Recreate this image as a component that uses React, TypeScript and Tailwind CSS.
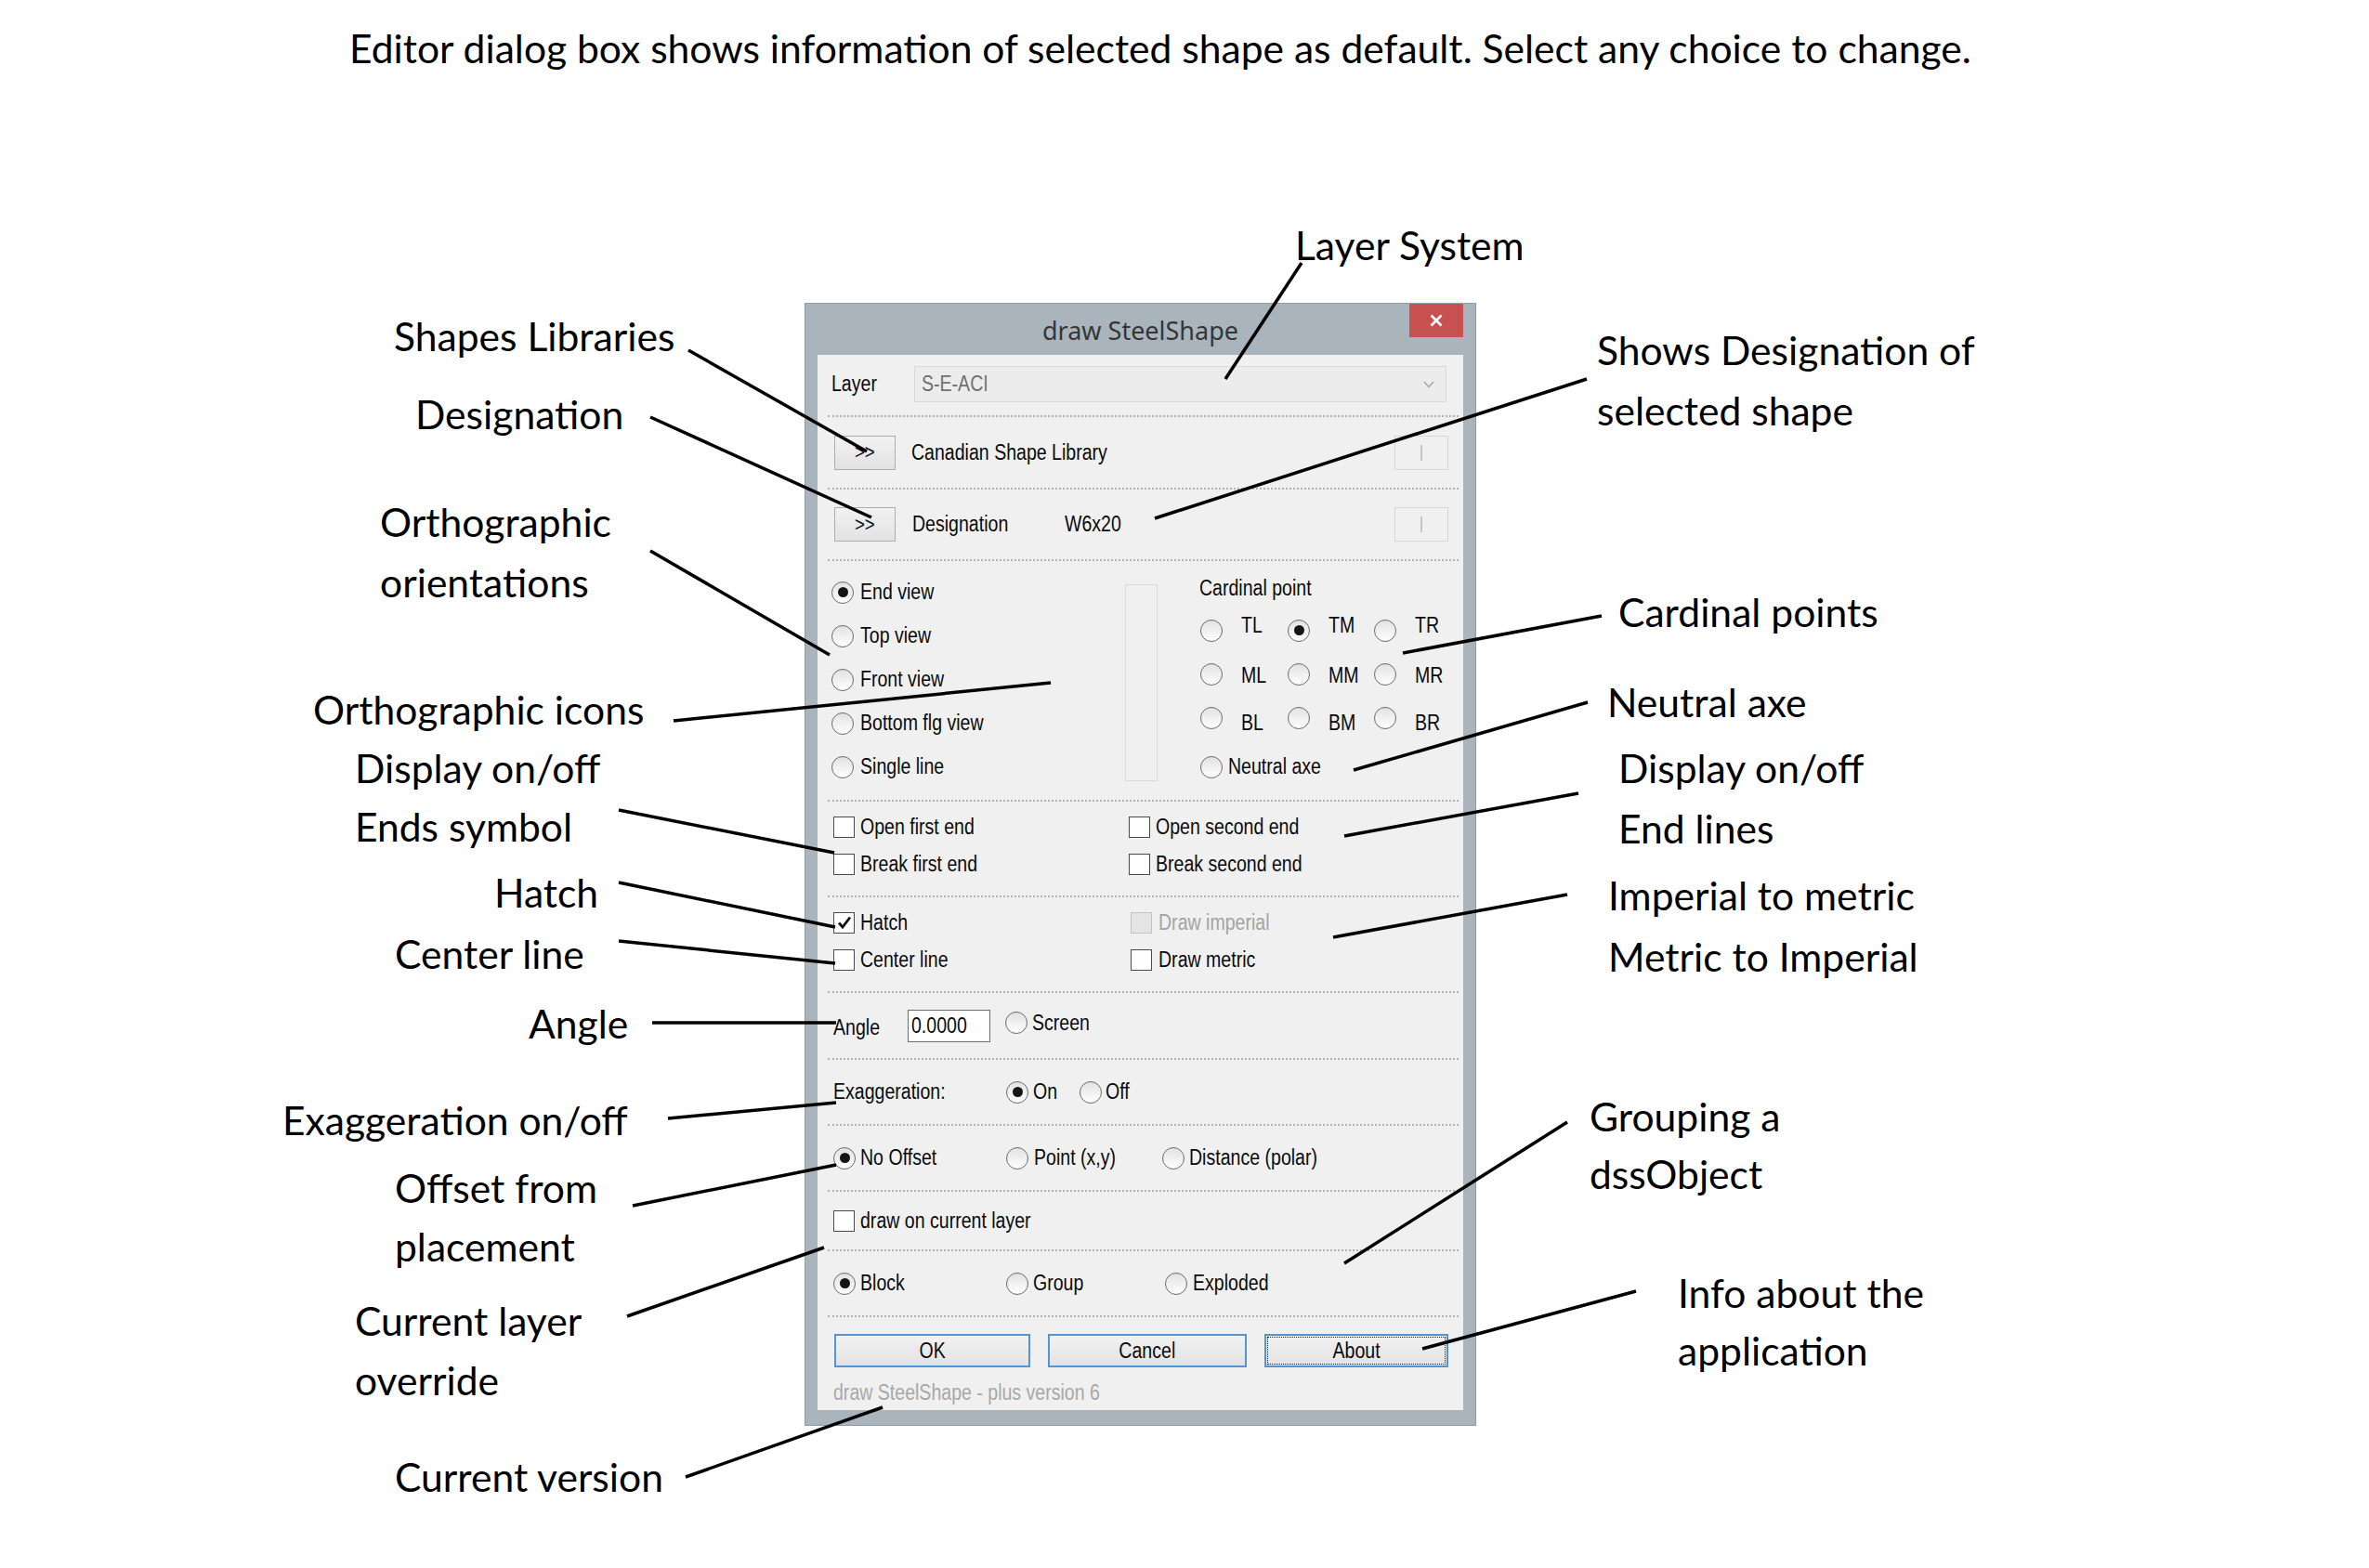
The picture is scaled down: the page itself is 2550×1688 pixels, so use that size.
import React from "react";

function T({ children, className = "" }: { children: React.ReactNode; className?: string }) {
  return <span className={"inline-block origin-left scale-x-[0.85] whitespace-nowrap " + className}>{children}</span>;
}

function TC({ children }: { children: React.ReactNode }) {
  return <span className="inline-block origin-center scale-x-[0.85] whitespace-nowrap">{children}</span>;
}

function Radio({ checked = false }: { checked?: boolean }) {
  return (
    <span className="flex h-[24px] w-[24px] shrink-0 items-center justify-center rounded-full border-[1.5px] border-[#6a6a6a] bg-linear-to-b from-[#e2e2e2] to-[#ffffff]">
      {checked && <span className="h-[11px] w-[11px] rounded-full bg-[#151515]" />}
    </span>
  );
}

function Check({ checked = false, disabled = false }: { checked?: boolean; disabled?: boolean }) {
  return (
    <span
      className={
        disabled
          ? "flex h-[23px] w-[23px] shrink-0 items-center justify-center border-[1.5px] border-[#c2c2c2] bg-[#e4e4e4]"
          : "flex h-[23px] w-[23px] shrink-0 items-center justify-center border-[1.5px] border-[#4a4a4a] bg-white"
      }
    >
      {checked && (
        <svg width="16" height="16" viewBox="0 0 16 16">
          <path d="M2 8.5 L6 13 L14 2.5" fill="none" stroke="#111" strokeWidth="2.8" />
        </svg>
      )}
    </span>
  );
}

function Sep() {
  return <div className="ml-[11px] mr-[5px] h-[2px] shrink-0 border-t-2 border-dotted border-[#b2b2b2]" />;
}

function SmallBtn() {
  return (
    <div className="flex h-[37px] w-[66px] shrink-0 items-center justify-center border border-[#adadad] bg-linear-to-b from-[#f2f2f2] to-[#e2e2e2] text-[22px] leading-none text-[#111]">
      <TC>&gt;&gt;</TC>
    </div>
  );
}

function BarBtn() {
  return (
    <div className="ml-auto flex h-[37px] w-[58px] shrink-0 items-center justify-center border border-[#d6d6d6] bg-[#f0f0f0]">
      <div className="h-[17px] w-[2px] bg-[#c6c6c6]" />
    </div>
  );
}

function Dialog() {
  return (
    <div className="ml-[866px] mt-[250px] flex w-[723px] flex-col border border-[#919ca4] bg-[#aab4bc] px-[13px] pb-[16px] [font-family:'Liberation_Sans',Arial,sans-serif]">
      {/* title bar */}
      <div className="grid h-[55px] grid-cols-[1fr_auto_1fr]">
        <div />
        <div className="self-center pt-[2px] text-[27px] leading-none text-[#363636] [font-family:'Noto_Sans',sans-serif]">
          draw SteelShape
        </div>
        <div className="flex justify-end">
          <div className="flex h-[36px] w-[58px] items-center justify-center bg-[#c75050]">
            <svg width="14" height="14" viewBox="0 0 14 14">
              <path d="M1.5 1.5 L12.5 12.5 M12.5 1.5 L1.5 12.5" stroke="#fff" strokeWidth="2.6" />
            </svg>
          </div>
        </div>
      </div>

      {/* client area */}
      <div className="flex h-[1136px] flex-col bg-[#f0f0f0] text-[23px] leading-none text-[#0a0a0a]">
        {/* Layer */}
        <div className="flex h-[65px] shrink-0 items-start pl-[15px] pt-[12px]">
          <div className="flex h-[39px] w-[89px] items-center">
            <T>Layer</T>
          </div>
          <div className="flex h-[39px] w-[573px] items-center border border-[#d9d9d9] bg-[#ececec] pl-[7px] pr-[12px] text-[#707070]">
            <T>S-E-ACI</T>
            <svg className="ml-auto" width="12" height="8" viewBox="0 0 12 8">
              <path d="M1 1 L6 6.5 L11 1" fill="none" stroke="#a9a9a9" strokeWidth="1.6" />
            </svg>
          </div>
        </div>
        <Sep />
        {/* Library */}
        <div className="flex h-[76px] shrink-0 items-center pl-[18px] pr-[16px]">
          <SmallBtn />
          <T className="ml-[17px]">Canadian Shape Library</T>
          <BarBtn />
        </div>
        <Sep />
        {/* Designation */}
        <div className="flex h-[75px] shrink-0 items-center pl-[18px] pr-[16px]">
          <SmallBtn />
          <span className="ml-[18px] w-[164px]">
            <T>Designation</T>
          </span>
          <T>W6x20</T>
          <BarBtn />
        </div>
        <Sep />
        {/* Views + cardinal */}
        <div className="flex h-[257px] shrink-0">
          <div className="flex w-[331px] flex-col pl-[15px] pt-[10px]">
            {["End view", "Top view", "Front view", "Bottom flg view", "Single line"].map((t, i) => (
              <div key={t} className="flex h-[47px] items-center">
                <Radio checked={i === 0} />
                <T className="ml-[7px]">{t}</T>
              </div>
            ))}
          </div>
          <div className="mt-[25px] h-[212px] w-[35px] border border-[#dadada]" />
          <div className="ml-[45px] flex flex-col pt-[17px]">
            <div className="flex h-[24px] items-center">
              <T>Cardinal point</T>
            </div>
            <div className="mt-[10px] grid grid-cols-[94px_93px_70px]">
              {[
                ["TL", "TM", "TR"],
                ["ML", "MM", "MR"],
                ["BL", "BM", "BR"],
              ].map((row, r) =>
                row.map((lab, c) => (
                  <div key={lab} className="flex h-[47px] items-center pl-[1px]">
                    <Radio checked={r === 0 && c === 1} />
                    <span
                      className={
                        r === 0 ? "ml-[20px] mb-[10px]" : r === 2 ? "ml-[20px] mt-[12px]" : "ml-[20px] mt-[3px]"
                      }
                    >
                      <T>{lab}</T>
                    </span>
                  </div>
                ))
              )}
            </div>
            <div className="mt-[6px] flex h-[47px] items-center pl-[1px]">
              <Radio />
              <T className="ml-[6px]">Neutral axe</T>
            </div>
          </div>
        </div>
        <Sep />
        {/* Ends */}
        <div className="flex h-[101px] shrink-0 flex-col pt-[7px]">
          <div className="flex h-[40px] items-center">
            <div className="flex w-[335px] items-center pl-[17px]">
              <Check />
              <T className="ml-[6px]">Open first end</T>
            </div>
            <div className="flex items-center">
              <Check />
              <T className="ml-[6px]">Open second end</T>
            </div>
          </div>
          <div className="flex h-[40px] items-center">
            <div className="flex w-[335px] items-center pl-[17px]">
              <Check />
              <T className="ml-[6px]">Break first end</T>
            </div>
            <div className="flex items-center">
              <Check />
              <T className="ml-[6px]">Break second end</T>
            </div>
          </div>
        </div>
        <Sep />
        {/* Hatch */}
        <div className="flex h-[101px] shrink-0 flex-col pt-[7px]">
          <div className="flex h-[40px] items-center">
            <div className="flex w-[337px] items-center pl-[17px]">
              <Check checked />
              <T className="ml-[6px]">Hatch</T>
            </div>
            <div className="flex items-center">
              <Check disabled />
              <T className="ml-[7px] text-[#a3a3a3]">Draw imperial</T>
            </div>
          </div>
          <div className="flex h-[40px] items-center">
            <div className="flex w-[337px] items-center pl-[17px]">
              <Check />
              <T className="ml-[6px]">Center line</T>
            </div>
            <div className="flex items-center">
              <Check />
              <T className="ml-[7px]">Draw metric</T>
            </div>
          </div>
        </div>
        <Sep />
        {/* Angle */}
        <div className="flex h-[70px] shrink-0 items-center pl-[17px]">
          <span className="mt-[4px] w-[80px]">
            <T>Angle</T>
          </span>
          <div className="flex h-[35px] w-[89px] items-center border border-[#6e6e6e] bg-white pl-[3px]">
            <T>0.0000</T>
          </div>
          <div className="mb-[6px] ml-[16px] flex items-center">
            <Radio />
            <T className="ml-[5px]">Screen</T>
          </div>
        </div>
        <Sep />
        {/* Exaggeration */}
        <div className="flex h-[69px] shrink-0 items-center pl-[17px]">
          <span className="w-[186px]">
            <T>Exaggeration:</T>
          </span>
          <div className="flex w-[79px] items-center">
            <Radio checked />
            <T className="ml-[5px]">On</T>
          </div>
          <div className="flex items-center">
            <Radio />
            <T className="ml-[4px]">Off</T>
          </div>
        </div>
        <Sep />
        {/* Offset */}
        <div className="flex h-[69px] shrink-0 items-center pl-[17px]">
          <div className="flex w-[186px] items-center">
            <Radio checked />
            <T className="ml-[5px]">No Offset</T>
          </div>
          <div className="flex w-[168px] items-center">
            <Radio />
            <T className="ml-[6px]">Point (x,y)</T>
          </div>
          <div className="flex items-center">
            <Radio />
            <T className="ml-[5px]">Distance (polar)</T>
          </div>
        </div>
        <Sep />
        {/* current layer */}
        <div className="flex h-[62px] shrink-0 items-center pl-[17px]">
          <Check />
          <T className="ml-[6px]">draw on current layer</T>
        </div>
        <Sep />
        {/* Block */}
        <div className="flex h-[69px] shrink-0 items-center pl-[17px]">
          <div className="flex w-[186px] items-center">
            <Radio checked />
            <T className="ml-[5px]">Block</T>
          </div>
          <div className="flex w-[171px] items-center">
            <Radio />
            <T className="ml-[5px]">Group</T>
          </div>
          <div className="flex items-center">
            <Radio />
            <T className="ml-[6px]">Exploded</T>
          </div>
        </div>
        <Sep />
        {/* buttons */}
        <div className="flex shrink-0 flex-col pt-[18px]">
          <div className="flex gap-[19px] pl-[18px]">
            <div className="flex h-[36px] w-[211px] items-center justify-center border-2 border-[#5595d3] bg-linear-to-b from-[#f1f1f1] to-[#e3e3e3]">
              <TC>OK</TC>
            </div>
            <div className="flex h-[36px] w-[214px] items-center justify-center border-2 border-[#5595d3] bg-linear-to-b from-[#f1f1f1] to-[#e3e3e3]">
              <TC>Cancel</TC>
            </div>
            <div className="flex h-[36px] w-[198px] items-center justify-center border-2 border-[#5595d3] bg-linear-to-b from-[#f1f1f1] to-[#e3e3e3] p-[1px]">
              <div className="flex h-full w-full items-center justify-center border border-dotted border-[#222]">
                <TC>About</TC>
              </div>
            </div>
          </div>
          <div className="mt-[16px] pl-[17px] text-[#a8a8a8]">
            <T>draw SteelShape - plus version 6</T>
          </div>
        </div>
      </div>
    </div>
  );
}

const lines: [number, number, number, number][] = [
  [741, 377, 933, 486],
  [700, 449, 938, 557],
  [700, 593, 893, 705],
  [725, 776, 1131, 735],
  [666, 872, 898, 918],
  [666, 950, 899, 998],
  [666, 1013, 899, 1037],
  [702, 1101, 900, 1101],
  [719, 1204, 900, 1187],
  [681, 1298, 900, 1254],
  [675, 1417, 887, 1343],
  [738, 1590, 950, 1515],
  [1401, 283, 1319, 408],
  [1708, 408, 1243, 558],
  [1724, 663, 1510, 703],
  [1709, 756, 1457, 829],
  [1699, 854, 1447, 900],
  [1687, 963, 1435, 1009],
  [1687, 1208, 1447, 1360],
  [1761, 1390, 1531, 1452],
];

export default function App() {
  return (
    <div className="relative h-[1688px] w-[2550px] overflow-hidden bg-white text-black [font-family:'Lato','Open_Sans',sans-serif]">
      <div className="pl-[376px] pt-[28px] text-[42.6px] leading-[48px]">
        Editor dialog box shows information of selected shape as default. Select any choice to change.
      </div>

      <Dialog />

      {/* leader lines */}
      <svg className="pointer-events-none absolute left-0 top-0" width="2550" height="1688">
        {lines.map(([x1, y1, x2, y2], i) => (
          <line key={i} x1={x1} y1={y1} x2={x2} y2={y2} stroke="#000" strokeWidth="3.5" />
        ))}
      </svg>

      {/* left annotations */}
      <div className="absolute left-[424px] top-[338px] text-[42.6px] leading-[48px]">Shapes Libraries</div>
      <div className="absolute left-[447px] top-[422px] text-[42.6px] leading-[48px]">Designation</div>
      <div className="absolute left-[409px] top-[538px] text-[42.6px] leading-[48px]">Orthographic</div>
      <div className="absolute left-[409px] top-[603px] text-[42.6px] leading-[48px]">orientations</div>
      <div className="absolute left-[337px] top-[740px] text-[42.6px] leading-[48px]">Orthographic icons</div>
      <div className="absolute left-[382px] top-[803px] text-[42.6px] leading-[48px]">Display on/off</div>
      <div className="absolute left-[382px] top-[866px] text-[42.6px] leading-[48px]">Ends symbol</div>
      <div className="absolute left-[532px] top-[937px] text-[42.6px] leading-[48px]">Hatch</div>
      <div className="absolute left-[425px] top-[1003px] text-[42.6px] leading-[48px]">Center line</div>
      <div className="absolute left-[569px] top-[1078px] text-[42.6px] leading-[48px]">Angle</div>
      <div className="absolute left-[304px] top-[1182px] text-[42.6px] leading-[48px]">Exaggeration on/off</div>
      <div className="absolute left-[425px] top-[1255px] text-[42.6px] leading-[48px]">Offset from</div>
      <div className="absolute left-[425px] top-[1318px] text-[42.6px] leading-[48px]">placement</div>
      <div className="absolute left-[382px] top-[1398px] text-[42.6px] leading-[48px]">Current layer</div>
      <div className="absolute left-[382px] top-[1462px] text-[42.6px] leading-[48px]">override</div>
      <div className="absolute left-[425px] top-[1566px] text-[42.6px] leading-[48px]">Current version</div>

      {/* right annotations */}
      <div className="absolute left-[1394px] top-[240px] text-[42.6px] leading-[48px]">Layer System</div>
      <div className="absolute left-[1719px] top-[353px] text-[42.6px] leading-[48px]">Shows Designation of</div>
      <div className="absolute left-[1719px] top-[418px] text-[42.6px] leading-[48px]">selected shape</div>
      <div className="absolute left-[1742px] top-[635px] text-[42.6px] leading-[48px]">Cardinal points</div>
      <div className="absolute left-[1730px] top-[732px] text-[42.6px] leading-[48px]">Neutral axe</div>
      <div className="absolute left-[1742px] top-[803px] text-[42.6px] leading-[48px]">Display on/off</div>
      <div className="absolute left-[1742px] top-[868px] text-[42.6px] leading-[48px]">End lines</div>
      <div className="absolute left-[1731px] top-[940px] text-[42.6px] leading-[48px]">Imperial to metric</div>
      <div className="absolute left-[1731px] top-[1006px] text-[42.6px] leading-[48px]">Metric to Imperial</div>
      <div className="absolute left-[1711px] top-[1178px] text-[42.6px] leading-[48px]">Grouping a</div>
      <div className="absolute left-[1711px] top-[1240px] text-[42.6px] leading-[48px]">dssObject</div>
      <div className="absolute left-[1806px] top-[1368px] text-[42.6px] leading-[48px]">Info about the</div>
      <div className="absolute left-[1806px] top-[1430px] text-[42.6px] leading-[48px]">application</div>
    </div>
  );
}
